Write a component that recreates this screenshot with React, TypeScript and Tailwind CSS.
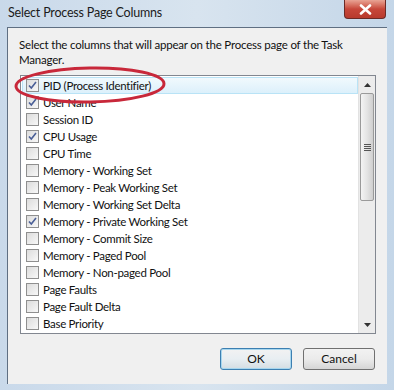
import React from 'react';

const ITEMS: { label: string; checked: boolean }[] = [
    { label: 'PID (Process Identifier)', checked: true },
    { label: 'User Name', checked: true },
    { label: 'Session ID', checked: false },
    { label: 'CPU Usage', checked: true },
    { label: 'CPU Time', checked: false },
    { label: 'Memory - Working Set', checked: false },
    { label: 'Memory - Peak Working Set', checked: false },
    { label: 'Memory - Working Set Delta', checked: false },
    { label: 'Memory - Private Working Set', checked: true },
    { label: 'Memory - Commit Size', checked: false },
    { label: 'Memory - Paged Pool', checked: false },
    { label: 'Memory - Non-paged Pool', checked: false },
    { label: 'Page Faults', checked: false },
    { label: 'Page Fault Delta', checked: false },
    { label: 'Base Priority', checked: false },
];

function CheckBox({ checked }: { checked: boolean }) {
    return (
        <span className="w-[13px] h-[13px] shrink-0 border border-[#8f8f8f] bg-gradient-to-br from-[#dcdcdc] to-[#f8f8f8] flex items-center justify-center">
            {checked && (
                <svg width="9" height="9" viewBox="0 0 9 9">
                    <path d="M1 4.5 L3.3 7 L8 1" fill="none" stroke="#4a5f97" strokeWidth="1.6" />
                </svg>
            )}
        </span>
    );
}

export default function App() {
    return (
        <div
            className="relative w-[394px] h-[390px] overflow-hidden bg-gradient-to-r from-[#c9d9ea] via-[#d8e4ef] to-[#c4d6e8]"
            style={{ fontFamily: 'Lato, "Noto Sans", sans-serif' }}
        >
            {/* title bar */}
            <div className="h-[27px] flex items-center pl-[8px] text-[12.5px] tracking-[-0.2px] text-[#1b1b1b]">
                Select Process Page Columns
            </div>
            <div className="absolute right-[8px] top-0 w-[42px] h-[19px] rounded-b-[4px] border border-[#6b2a26] border-t-0 bg-gradient-to-b from-[#e8a394] via-[#c7473a] to-[#b83a2d] flex items-center justify-center">
                <svg width="13" height="11" viewBox="0 0 13 11">
                    <path d="M2 1.5 L11 9.5 M11 1.5 L2 9.5" stroke="#fff" strokeWidth="2.6" strokeLinecap="round" />
                </svg>
            </div>

            {/* client area */}
            <div className="mx-[7px] h-[357px] bg-[#f0f0f0] border-t border-l border-[#5f6f82] flex flex-col">
                <p className="pl-[11px] pr-4 pt-[9px] text-[11.5px] tracking-[-0.2px] leading-[15px] text-[#111]">
                    Select the columns that will appear on the Process page of the Task Manager.
                </p>

                <div className="ml-[12px] mt-[8px] w-[356px] h-[259px] border border-[#828790] bg-white flex">
                    <div className="flex-1 pt-[1px] pl-[1px]">
                        {ITEMS.map((item, i) => (
                            <div
                                key={i}
                                className={`h-[17px] flex items-center gap-[4px] text-[11.5px] tracking-[-0.3px] text-[#111] ${
                                    i === 0
                                        ? 'bg-gradient-to-b from-[#f1f9fd] to-[#dcf0fb] border border-[#b9e3f6] pl-[3px]'
                                        : 'pl-[4px]'
                                }`}
                            >
                                <CheckBox checked={item.checked} />
                                <span className="whitespace-nowrap">{item.label}</span>
                            </div>
                        ))}
                    </div>
                    {/* scrollbar */}
                    <div className="w-[17px] bg-[#ececec] border-l border-[#e2e2e2] flex flex-col">
                        <div className="h-[17px] flex items-center justify-center">
                            <svg width="7" height="4" viewBox="0 0 7 4">
                                <path d="M0 4 L3.5 0 L7 4 Z" fill="#333" />
                            </svg>
                        </div>
                        <div className="mx-[1px] h-[108px] rounded-[2px] border border-[#9a9a9a] bg-gradient-to-r from-[#f4f4f4] via-[#e4e4e4] to-[#cfcfcf] flex items-center justify-center">
                            <svg width="7" height="8" viewBox="0 0 7 8">
                                <path d="M0 1.5 H7 M0 3.5 H7 M0 5.5 H7 M0 7.5 H7" stroke="#555" strokeWidth="1" />
                            </svg>
                        </div>
                        <div className="flex-1" />
                        <div className="h-[17px] flex items-center justify-center">
                            <svg width="7" height="4" viewBox="0 0 7 4">
                                <path d="M0 0 L3.5 4 L7 0 Z" fill="#333" />
                            </svg>
                        </div>
                    </div>
                </div>

                <div className="flex justify-end gap-[11px] pr-[12px] mt-[14px]">
                    <button className="w-[72px] h-[22px] rounded-[3px] border border-[#3c7fb1] bg-gradient-to-b from-[#f2f2f2] via-[#e8eef2] to-[#d4dde3] text-[12px] text-[#111] shadow-[inset_0_0_0_1px_#a7d6ee]">
                        OK
                    </button>
                    <button className="w-[72px] h-[22px] rounded-[3px] border border-[#707070] bg-gradient-to-b from-[#f2f2f2] via-[#ebebeb] to-[#d5d5d5] text-[12px] text-[#111]">
                        Cancel
                    </button>
                </div>
            </div>

            {/* red annotation ellipse */}
            <svg className="absolute left-[12px] top-[64px]" width="156" height="42" viewBox="0 0 156 42">
                <ellipse cx="78" cy="21" rx="74" ry="17" fill="none" stroke="#c8283a" strokeWidth="3" transform="rotate(-1 78 21)" />
            </svg>
        </div>
    );
}
